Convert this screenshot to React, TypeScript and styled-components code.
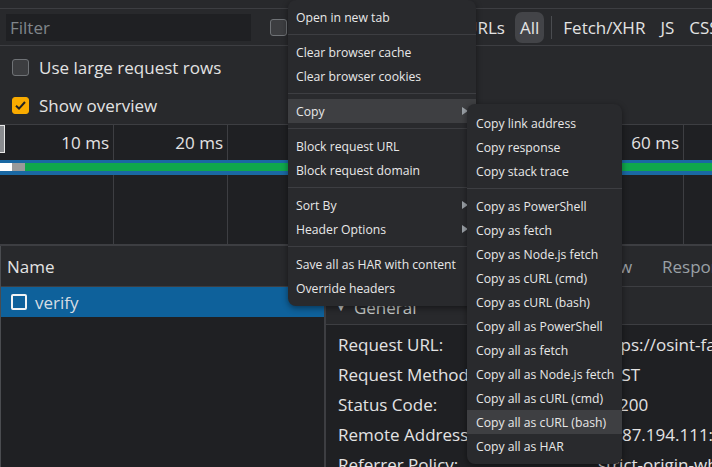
import React from 'react';
import styled, { createGlobalStyle } from 'styled-components';

const GlobalStyle = createGlobalStyle`
  html, body {
    margin: 0;
    padding: 0;
    background: #202124;
  }
  * {
    box-sizing: border-box;
  }
`;

const font = `"Open Sans", "Noto Sans", sans-serif`;

const Screen = styled.div`
  position: relative;
  width: 712px;
  height: 467px;
  overflow: hidden;
  background: #1f2023;
  font-family: ${font};
  color: #e3e3e3;
`;

const TopStrip = styled.div`
  height: 9px;
  background: #28292c;
  border-bottom: 1px solid #3d3e42;
`;

const FilterBar = styled.div`
  display: flex;
  align-items: center;
  height: 37px;
  padding-left: 6px;
  background: #28292c;
  border-bottom: 1px solid #3d3e42;
  font-size: 17px;
  white-space: nowrap;
  overflow: hidden;
`;

const FilterInput = styled.div`
  flex: none;
  width: 245px;
  height: 27px;
  display: flex;
  align-items: center;
  padding: 1px 0 0 4px;
  background: #1f2023;
  color: #80868b;
  font-size: 17px;
`;

const Box = styled.span<{ $checked?: boolean }>`
  flex: none;
  width: 17px;
  height: 17px;
  border-radius: 3px;
  display: inline-flex;
  align-items: center;
  justify-content: center;
  background: ${(p) => (p.$checked ? '#f9ab00' : '#3c3d40')};
  border: 1px solid ${(p) => (p.$checked ? '#f9ab00' : '#6f7276')};
`;

const HiddenGroup = styled.div`
  flex: none;
  display: flex;
  align-items: center;
  justify-content: space-between;
  margin-left: 19px;
  width: 235px;
  overflow: hidden;
`;

const Pill = styled.span<{ $active?: boolean }>`
  display: inline-flex;
  align-items: center;
  height: 31px;
  padding: 0 5px;
  border-radius: 7px;
  background: ${(p) => (p.$active ? '#434448' : 'transparent')};
  color: #e3e3e3;
`;

const TypeSep = styled.span`
  flex: none;
  width: 1px;
  height: 23px;
  background: #4a4c50;
  margin: 0 11px 0 7px;
`;

const Types = styled.div<{ $first?: boolean }>`
  flex: none;
  display: flex;
  align-items: center;
  gap: 15px;
  margin-left: ${(p) => (p.$first ? 10 : 0)}px;
`;

const Options = styled.div`
  padding-top: 2px;
  background: #28292c;
  border-bottom: 1px solid #3d3e42;
`;

const OptionRow = styled.div`
  display: flex;
  align-items: center;
  gap: 10px;
  height: 38px;
  padding-left: 12px;
  font-size: 17px;
`;

const Overview = styled.div`
  position: relative;
  height: 121px;
  border-bottom: 2px solid #3d3e42;
  background-color: #1f2023;
  background-image: repeating-linear-gradient(
    to right,
    transparent 0,
    transparent 113px,
    #3d3e42 113px,
    #3d3e42 114px
  );
`;

const Ruler = styled.div`
  display: flex;
  height: 35px;
`;

const Tick = styled.div`
  flex: none;
  width: 114px;
  padding-right: 5px;
  text-align: right;
  font-size: 17px;
  line-height: 36px;
`;

const Handle = styled.div`
  position: absolute;
  left: 0;
  top: 0;
  width: 5px;
  height: 28px;
  background: #8a8c90;
  border: 1px solid #e8e8e8;
  border-left: 0;
`;

const BarTrack = styled.div`
  display: flex;
  height: 15px;
  padding: 3px 0 4px;
  background: #1a68a3;
`;

const BarPart = styled.div<{ $color: string }>`
  flex: none;
  background: ${(p) => p.$color};
`;

const Split = styled.div`
  display: grid;
  grid-template-columns: 324px 2px 1fr;
  height: 221px;
`;

const Divider = styled.div`
  background: #3d3e42;
`;

const NamePane = styled.div`
  border-left: 1px solid #4a4c50;
  background: #1f2023;
`;

const PaneHeader = styled.div`
  display: flex;
  align-items: center;
  height: 41px;
  background: #28292c;
  border-bottom: 1px solid #3d3e42;
  font-size: 17px;
`;

const NameTitle = styled.span`
  padding-left: 6px;
`;

const RequestRow = styled.div<{ $selected?: boolean }>`
  display: flex;
  align-items: center;
  gap: 8px;
  height: 30px;
  padding-left: 10px;
  font-size: 17px;
  color: #d7dde3;
  background: ${(p) => (p.$selected ? '#0e619b' : 'transparent')};
`;

const RowBox = styled.span`
  width: 16px;
  height: 16px;
  border: 2px solid #f1f3f4;
  border-radius: 2px;
`;

const DetailPane = styled.div`
  background: #1f2023;
  overflow: hidden;
`;

const Tab = styled.span`
  padding: 0 15px;
  color: #9aa0a6;
  white-space: nowrap;
`;

const SectionHead = styled.div`
  display: flex;
  align-items: center;
  gap: 8px;
  height: 38px;
  padding: 3px 0 0 10px;
  background: #28292c;
  border-bottom: 1px solid #3d3e42;
  font-size: 17px;
  color: #c4c7c5;
`;

const Fields = styled.div`
  display: grid;
  grid-template-columns: 260px 1fr;
  grid-auto-rows: 30px;
  padding: 4px 0 0 12px;
  font-size: 17px;
  white-space: nowrap;
  align-items: center;
`;

const Value = styled.span`
  display: flex;
  align-items: center;
  gap: 8px;
`;

const StatusDot = styled.span`
  width: 13px;
  height: 13px;
  border-radius: 50%;
  background: #0fa84c;
`;

const Menu = styled.div<{ $left: number; $top: number; $width: number; $padTop: number }>`
  position: absolute;
  left: ${(p) => p.$left}px;
  top: ${(p) => p.$top}px;
  width: ${(p) => p.$width}px;
  padding: ${(p) => p.$padTop}px 0 6px;
  background: #292a2d;
  border-radius: 8px;
  box-shadow: 0 2px 6px rgba(0, 0, 0, 0.45);
  font-family: ${font};
  font-size: 12.2px;
  color: #e8e8e8;
`;

const Item = styled.div<{ $hover?: boolean; $pad: number }>`
  display: flex;
  align-items: center;
  justify-content: space-between;
  height: 24px;
  padding: 0 8px 0 ${(p) => p.$pad}px;
  white-space: nowrap;
  background: ${(p) => (p.$hover ? '#3e3f42' : 'transparent')};
`;

const Sep = styled.div`
  height: 1px;
  margin: 5px 0;
  background: #3d3e42;
`;

const Arrow = () => (
  <svg width="6" height="8" viewBox="0 0 6 8">
    <polygon points="0,0 6,4 0,8" fill="#9aa0a6" />
  </svg>
);

type Entry = { label?: string; sub?: boolean; hover?: boolean; sep?: boolean };

const mainMenu: Entry[] = [
  { label: 'Open in new tab' },
  { sep: true },
  { label: 'Clear browser cache' },
  { label: 'Clear browser cookies' },
  { sep: true },
  { label: 'Copy', sub: true, hover: true },
  { sep: true },
  { label: 'Block request URL' },
  { label: 'Block request domain' },
  { sep: true },
  { label: 'Sort By', sub: true },
  { label: 'Header Options', sub: true },
  { sep: true },
  { label: 'Save all as HAR with content' },
  { label: 'Override headers' },
];

const copyMenu: Entry[] = [
  { label: 'Copy link address' },
  { label: 'Copy response' },
  { label: 'Copy stack trace' },
  { sep: true },
  { label: 'Copy as PowerShell' },
  { label: 'Copy as fetch' },
  { label: 'Copy as Node.js fetch' },
  { label: 'Copy as cURL (cmd)' },
  { label: 'Copy as cURL (bash)' },
  { label: 'Copy all as PowerShell' },
  { label: 'Copy all as fetch' },
  { label: 'Copy all as Node.js fetch' },
  { label: 'Copy all as cURL (cmd)' },
  { label: 'Copy all as cURL (bash)', hover: true },
  { label: 'Copy all as HAR' },
];

const renderEntries = (entries: Entry[], pad: number) =>
  entries.map((e, i) =>
    e.sep ? (
      <Sep key={i} />
    ) : (
      <Item key={i} $hover={e.hover} $pad={pad}>
        <span>{e.label}</span>
        {e.sub && <Arrow />}
      </Item>
    )
  );

const fields: [string, string, boolean?][] = [
  ['Request URL:', 'https://osint-fa.example/api/verify'],
  ['Request Method:', 'POST'],
  ['Status Code:', '200', true],
  ['Remote Address:', '13.87.194.111:443'],
  ['Referrer Policy:', 'strict-origin-when-cross-origin'],
];

const App: React.FC = () => {
  return (
    <Screen>
      <GlobalStyle />
      <TopStrip />
      <FilterBar>
        <FilterInput>Filter</FilterInput>
        <HiddenGroup>
          <Box />
          <span>Invert</span>
          <Box />
          <span>Hide data URLs</span>
        </HiddenGroup>
        <Types $first>
          <Pill $active>All</Pill>
        </Types>
        <TypeSep />
        <Types>
          <span>Fetch/XHR</span>
          <span>JS</span>
          <span>CSS</span>
        </Types>
      </FilterBar>
      <Options>
        <OptionRow>
          <Box />
          <span>Use large request rows</span>
        </OptionRow>
        <OptionRow>
          <Box $checked>
            <svg width="13" height="13" viewBox="0 0 13 13">
              <path d="M2 6.8 L5 9.6 L11 3" stroke="#202124" strokeWidth="2" fill="none" />
            </svg>
          </Box>
          <span>Show overview</span>
        </OptionRow>
      </Options>
      <Overview>
        <Handle />
        <Ruler>
          {['10 ms', '20 ms', '30 ms', '40 ms', '50 ms', '60 ms', '70 ms'].map((t) => (
            <Tick key={t}>{t}</Tick>
          ))}
        </Ruler>
        <BarTrack>
          <BarPart $color="#ffffff" style={{ width: 12 }} />
          <BarPart $color="#9a9a9a" style={{ width: 13 }} />
          <BarPart $color="#0fa84c" style={{ flex: 1 }} />
        </BarTrack>
      </Overview>
      <Split>
        <NamePane>
          <PaneHeader>
            <NameTitle>Name</NameTitle>
          </PaneHeader>
          <RequestRow $selected>
            <RowBox />
            <span>verify</span>
          </RequestRow>
        </NamePane>
        <Divider />
        <DetailPane>
          <PaneHeader>
            <Tab>×</Tab>
            <Tab>Headers</Tab>
            <Tab>Payload</Tab>
            <Tab>Preview</Tab>
            <Tab>Response</Tab>
          </PaneHeader>
          <SectionHead>
            <span style={{ fontSize: 10 }}>▼</span>
            <span>General</span>
          </SectionHead>
          <Fields>
            {fields.map(([k, v, dot]) => (
              <React.Fragment key={k}>
                <span>{k}</span>
                <Value>
                  {dot && <StatusDot />}
                  {v}
                </Value>
              </React.Fragment>
            ))}
          </Fields>
        </DetailPane>
      </Split>
      <Menu $left={288} $top={0} $width={188} $padTop={5}>
        {renderEntries(mainMenu, 8)}
      </Menu>
      <Menu $left={467} $top={104} $width={155} $padTop={7}>
        {renderEntries(copyMenu, 9)}
      </Menu>
    </Screen>
  );
};

export default App;
